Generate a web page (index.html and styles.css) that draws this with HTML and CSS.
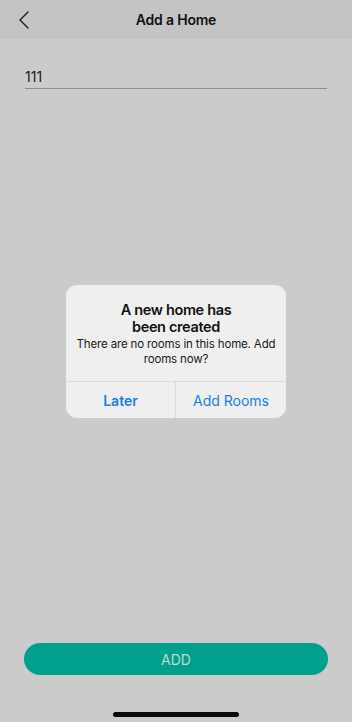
FILE: index.html
```html
<!DOCTYPE html>
<html>
<head>
<meta charset="utf-8">
<link rel="stylesheet" href="styles.css">
</head>
<body>
<div class="screen">
  <header class="topbar">
    <div class="back">
      <svg width="12" height="18" viewBox="0 0 12 18"><path d="M10 1 L2 9 L10 17" fill="none" stroke="#1c1c1c" stroke-width="1.4" stroke-linecap="round" stroke-linejoin="round"/></svg>
    </div>
    <div class="title">Add a Home</div>
    <div></div>
  </header>
  <main class="content">
    <div class="field">111</div>
  </main>
  <div class="actions">
    <button class="add-btn">ADD</button>
  </div>
  <div class="home-bar-wrap"><div class="home-bar"></div></div>

  <div class="overlay">
    <div class="dialog">
      <div class="dialog-body">
        <div class="dialog-title">A new home has<br>been created</div>
        <div class="dialog-msg">There are no rooms in this home. Add<br>rooms now?</div>
      </div>
      <div class="dialog-buttons">
        <div class="dbtn later">Later</div>
        <div class="dbtn addrooms">Add Rooms</div>
      </div>
    </div>
  </div>
</div>
</body>
</html>
```
FILE: styles.css
```css
html, body {
  margin: 0;
  padding: 0;
}
body {
  font-family: Inter, "Noto Sans", sans-serif;
  background: #cbcbcb;
}
.screen {
  position: relative;
  width: 352px;
  height: 722px;
  display: flex;
  flex-direction: column;
  background: #cbcbcb;
  overflow: hidden;
}
.topbar {
  height: 39px;
  background: #c4c4c4;
  display: grid;
  grid-template-columns: 48px 1fr 48px;
  align-items: center;
}
.back {
  padding-left: 18px;
  display: flex;
  align-items: center;
  height: 39px;
}
.title {
  text-align: center;
  font-size: 14px;
  font-weight: 600;
  color: #111;
  letter-spacing: -0.2px;
}
.content {
  flex: 1;
  padding: 29px 25px 0;
}
.field {
  font-size: 14px;
  color: #1a1a1a;
  line-height: 18px;
  padding-bottom: 2px;
  border-bottom: 1px solid #8f8f8f;
}
.actions {
  padding: 0 24px;
}
.add-btn {
  display: block;
  width: 100%;
  height: 32px;
  border: none;
  border-radius: 16px;
  background: #00a08c;
  color: #bcdcd6;
  font-family: Inter, "Noto Sans", sans-serif;
  font-size: 14px;
  font-weight: 400;
  padding: 0;
}
.home-bar-wrap {
  height: 47px;
  display: flex;
  justify-content: center;
  align-items: flex-end;
  padding-bottom: 5px;
  box-sizing: border-box;
}
.home-bar {
  width: 126px;
  height: 5px;
  border-radius: 3px;
  background: #0a0a0a;
}
.overlay {
  position: absolute;
  inset: 0;
  display: flex;
  justify-content: center;
  align-items: flex-start;
  padding-top: 285px;
}
.dialog {
  width: 220px;
  background: #efefef;
  border-radius: 11px;
  overflow: hidden;
}
.dialog-body {
  padding: 16px 4px 14px;
  text-align: center;
}
.dialog-title {
  font-size: 14.5px;
  font-weight: 600;
  line-height: 17px;
  color: #111;
  letter-spacing: -0.35px;
}
.dialog-msg {
  margin-top: 2px;
  font-size: 11.5px;
  line-height: 15px;
  color: #1a1a1a;
  white-space: nowrap;
  letter-spacing: -0.15px;
}
.dialog-buttons {
  display: grid;
  grid-template-columns: 110px 1fr;
  height: 36px;
  border-top: 1px solid #dadada;
}
.dbtn {
  display: flex;
  align-items: center;
  justify-content: center;
  font-size: 14px;
  color: #1a7fe3;
}
.later {
  font-weight: 600;
  border-right: 1px solid #dadada;
}
```
